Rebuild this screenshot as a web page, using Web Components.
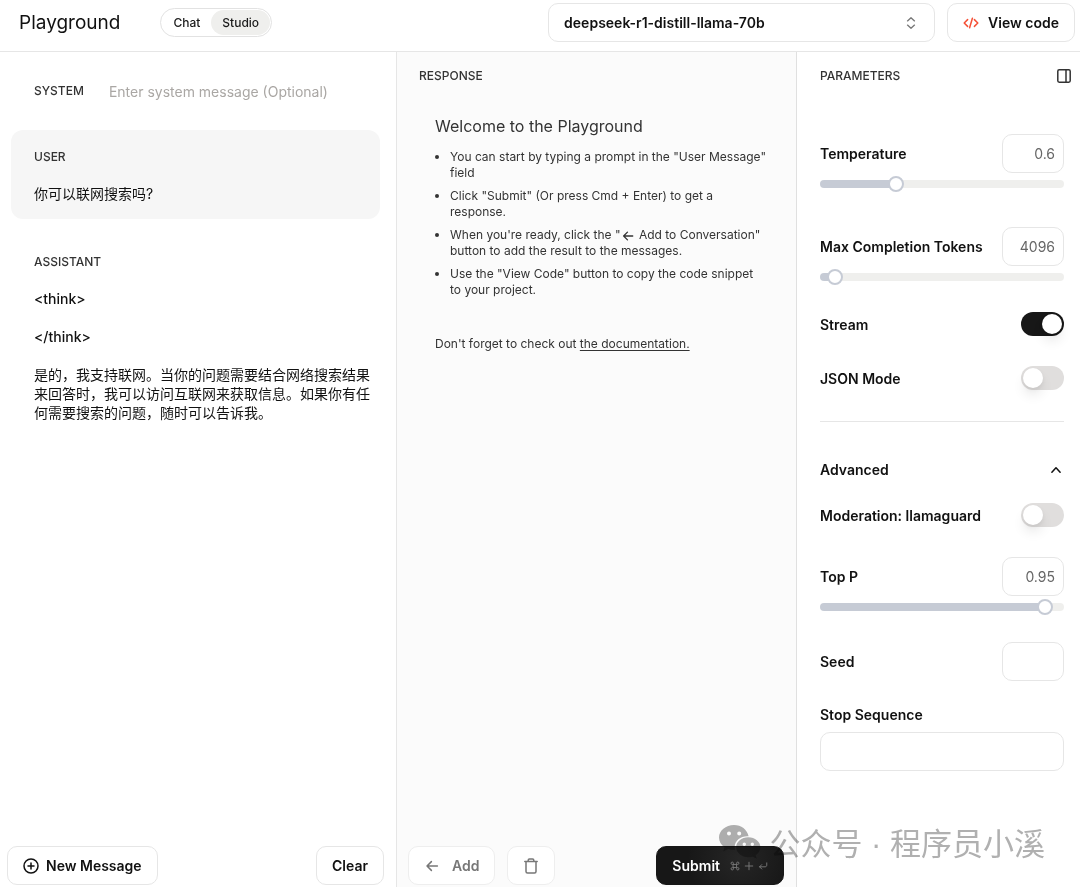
<!DOCTYPE html>
<html lang="en">
<head>
<meta charset="utf-8">
<meta name="viewport" content="width=device-width, initial-scale=1">
<title>Playground</title>
<style>
    html, body { height: 100%; }
    body {
        margin: 0;
        font-family: Inter, "Noto Sans CJK SC", sans-serif;
        font-size: 14px;
        line-height: 19px;
        color: #111;
        background: #fff;
    }
</style>
</head>
<body>
<playground-app></playground-app>

<script>
const ICONS = {
    code: ['0 0 16 16', '<path d="M4.6 4.6 1.2 8l3.4 3.4M11.4 4.6 14.8 8l-3.4 3.4M9.4 3.2 6.6 12.8"/>'],
    updown: ['0 0 16 16', '<path d="M4 5.6 8 1.9l4 3.7M4 10.4l4 3.7 4-3.7"/>'],
    panel: ['0 0 16 16', '<rect x="1.8" y="1.8" width="12.4" height="12.4" rx="1.4"/><path d="M10 1.8v12.4"/>'],
    plus: ['0 0 16 16', '<circle cx="8" cy="8" r="7"/><path d="M8 5v6M5 8h6"/>'],
    left: ['0 0 16 16', '<path d="M13.4 8H3M7.4 3.6 3 8l4.4 4.4"/>'],
    up: ['0 0 16 16', '<path d="m2.5 11 5.5-6 5.5 6"/>'],
    trash: ['0 0 16 16', '<path d="M1.8 3.6h12.4M5.2 3.4V2.2c0-.7.5-1.2 1.2-1.2h3.2c.7 0 1.2.5 1.2 1.2v1.2M3 3.8v9.6c0 .9.6 1.5 1.5 1.5h7c.9 0 1.5-.6 1.5-1.5V3.8"/>'],
    command: ['0 0 16 16', '<path d="M5.5 5.5h5v5h-5zM5.5 5.5H3.6a1.9 1.9 0 1 1 1.9-1.9zM10.5 5.5V3.6a1.9 1.9 0 1 1 1.9 1.9zM5.5 10.5v1.9a1.9 1.9 0 1 1-1.9-1.9zM10.5 10.5h1.9a1.9 1.9 0 1 1-1.9 1.9z"/>'],
    add: ['0 0 16 16', '<path d="M8 2v12M2 8h12"/>'],
    enter: ['0 0 16 16', '<path d="M14 3v3.5c0 1.7-.9 2.8-2.8 2.8H2.5M6 5.8 2.5 9.3 6 12.8"/>']
};

class UiIcon extends HTMLElement {
    constructor() {
        super();
        this.attachShadow({ mode: 'open' });
    }

    connectedCallback() {
        const [box, shape] = ICONS[this.getAttribute('name')];
        this.shadowRoot.innerHTML = `
            <style>
                :host { display: inline-flex; width: 16px; height: 16px; flex: none; }
                svg {
                    width: 100%;
                    height: 100%;
                    fill: none;
                    stroke: currentColor;
                    stroke-width: var(--stroke, 1.5);
                    stroke-linecap: round;
                    stroke-linejoin: round;
                }
            </style>
            <svg viewBox="${box}" aria-hidden="true">${shape}</svg>
        `;
    }
}

class UiButton extends HTMLElement {
    constructor() {
        super();
        this.attachShadow({ mode: 'open' });
    }

    connectedCallback() {
        const label = this.getAttribute('label');
        this.shadowRoot.innerHTML = `
            <style>
                :host { display: block; flex: none; }
                button {
                    display: flex;
                    align-items: center;
                    gap: var(--gap, 7px);
                    height: 39px;
                    padding: 0 15px;
                    border: 1px solid #e6e6e6;
                    border-radius: 10px;
                    background: #fff;
                    color: inherit;
                    font: 600 14px/19px Inter, sans-serif;
                    cursor: pointer;
                }
                button:disabled { color: #777; border-color: #eee; cursor: default; }
                :host([dark]) button {
                    border-color: #171717;
                    background: radial-gradient(circle at 65% 30%, #262626, #171717 60%);
                    color: #fff;
                }
            </style>
            <button type="button" ${label ? `aria-label="${label}"` : ''} ${this.hasAttribute('disabled') ? 'disabled' : ''}>
                <slot></slot>
            </button>
        `;
    }
}

class ModeSwitch extends HTMLElement {
    constructor() {
        super();
        this.attachShadow({ mode: 'open' });
    }

    connectedCallback() {
        this.shadowRoot.innerHTML = `
            <style>
                :host {
                    display: flex;
                    padding: 1px;
                    border: 1px solid #e2e2e2;
                    border-radius: 15px;
                }
                button {
                    height: 25px;
                    padding: 0 11px;
                    border: 0;
                    border-radius: 13px;
                    background: none;
                    color: #1a1a1a;
                    font: 500 12px/16px Inter, sans-serif;
                    cursor: pointer;
                }
                button[aria-pressed="true"] { background: #efefed; }
            </style>
            <button type="button" aria-pressed="false">Chat</button>
            <button type="button" aria-pressed="true">Studio</button>
        `;
        const buttons = this.shadowRoot.querySelectorAll('button');
        buttons.forEach(button => {
            button.addEventListener('click', () => {
                buttons.forEach(b => b.setAttribute('aria-pressed', b === button));
            });
        });
    }
}

class ModelSelect extends HTMLElement {
    constructor() {
        super();
        this.attachShadow({ mode: 'open' });
    }

    connectedCallback() {
        this.shadowRoot.innerHTML = `
            <style>
                :host { display: grid; align-items: center; }
                select, ui-icon { grid-area: 1 / 1; }
                select {
                    appearance: none;
                    width: 100%;
                    height: 39px;
                    padding: 0 40px 0 15px;
                    border: 1px solid #e6e6e6;
                    border-radius: 10px;
                    background: #fff;
                    color: #111;
                    font: 600 14px/19px Inter, sans-serif;
                }
                ui-icon {
                    justify-self: end;
                    width: 14px;
                    height: 14px;
                    margin-right: 17px;
                    color: #777;
                    pointer-events: none;
                }
            </style>
            <select aria-label="Model">
                <option>deepseek-r1-distill-llama-70b</option>
            </select>
            <ui-icon name="updown"></ui-icon>
        `;
    }
}

class AppHeader extends HTMLElement {
    constructor() {
        super();
        this.attachShadow({ mode: 'open' });
    }

    connectedCallback() {
        this.shadowRoot.innerHTML = `
            <style>
                :host {
                    display: flex;
                    align-items: center;
                    gap: 12px;
                    padding: 3px 5px 9px 19px;
                    border-bottom: 1px solid #e6e6e6;
                }
                h1 { margin: 0 28px 0 0; font-size: 19px; line-height: 24px; font-weight: 400; }
                model-select { flex: 0 1 387px; min-width: 0; margin-left: auto; }
                ui-button { --gap: 9px; }
                .code { color: #f55036; }
            </style>
            <h1>Playground</h1>
            <mode-switch></mode-switch>
            <model-select></model-select>
            <ui-button><ui-icon class="code" name="code"></ui-icon>View code</ui-button>
        `;
    }
}

class SystemMessage extends HTMLElement {
    constructor() {
        super();
        this.attachShadow({ mode: 'open' });
    }

    connectedCallback() {
        this.shadowRoot.innerHTML = `
            <style>
                :host { display: flex; align-items: center; gap: 25px; height: 78px; padding: 0 23px; }
                label { font-size: 12px; line-height: 16px; font-weight: 500; color: #333; }
                input {
                    flex: 1;
                    min-width: 0;
                    padding: 0;
                    border: 0;
                    outline: 0;
                    background: none;
                    font: 14px/19px Inter, "Noto Sans CJK SC", sans-serif;
                }
                input::placeholder { color: #aaa7a4; }
            </style>
            <label for="system">SYSTEM</label>
            <input id="system" type="text" placeholder="Enter system message (Optional)">
        `;
    }
}

class ChatMessage extends HTMLElement {
    constructor() {
        super();
        this.attachShadow({ mode: 'open' });
    }

    connectedCallback() {
        this.shadowRoot.innerHTML = `
            <style>
                :host {
                    display: flex;
                    flex-direction: column;
                    gap: 19px;
                    padding: 19px 8px 16px 23px;
                    border-radius: 12px;
                }
                :host([active]) { background: #f6f6f6; }
                h2 { margin: 0; font-size: 12px; line-height: 16px; font-weight: 500; color: #333; }
                ::slotted(p) { margin: 0; }
            </style>
            <h2>${this.getAttribute('role-name')}</h2>
            <slot></slot>
        `;
    }
}

class MessagePanel extends HTMLElement {
    constructor() {
        super();
        this.attachShadow({ mode: 'open' });
    }

    connectedCallback() {
        this.shadowRoot.innerHTML = `
            <style>
                :host { display: flex; flex-direction: column; border-right: 1px solid #e6e6e6; }
                .messages {
                    flex: 1;
                    display: flex;
                    flex-direction: column;
                    padding: 0 16px 0 11px;
                }
                chat-message + chat-message { margin-top: 16px; }
                .think { font-weight: 500; }
                footer { display: flex; justify-content: space-between; padding: 0 12px 2px 7px; }
            </style>
            <div class="messages">
                <system-message></system-message>
                <chat-message role-name="USER" active>
                    <p lang="zh-CN">你可以联网搜索吗?</p>
                </chat-message>
                <chat-message role-name="ASSISTANT">
                    <p class="think">&lt;think&gt;</p>
                    <p class="think">&lt;/think&gt;</p>
                    <p lang="zh-CN">是的，我支持联网。当你的问题需要结合网络搜索结果来回答时，我可以访问互联网来获取信息。如果你有任何需要搜索的问题，随时可以告诉我。</p>
                </chat-message>
            </div>
            <footer>
                <ui-button><ui-icon name="plus"></ui-icon>New Message</ui-button>
                <ui-button>Clear</ui-button>
            </footer>
        `;
    }
}

class ResponsePanel extends HTMLElement {
    constructor() {
        super();
        this.attachShadow({ mode: 'open' });
    }

    connectedCallback() {
        this.shadowRoot.innerHTML = `
            <style>
                :host {
                    display: flex;
                    flex-direction: column;
                    background: #fbfbfb;
                    color: #333;
                    font-size: 12px;
                    line-height: 16px;
                }
                h2 { margin: 16px 22px 30px; font-size: 12px; font-weight: 500; }
                .welcome { flex: 1; padding: 0 29px 0 38px; }
                h3 { margin: 0 0 11px; font-size: 16px; line-height: 24px; font-weight: 400; }
                ul {
                    display: flex;
                    flex-direction: column;
                    gap: 7px;
                    margin: 0 0 38px;
                    padding: 0 0 0 15px;
                }
                li ui-icon { width: 14px; height: 14px; margin: 0 1px 0 0; vertical-align: -4px; }
                p { margin: 0; }
                a { color: inherit; text-underline-offset: 2px; }
                footer { display: flex; gap: 12px; padding: 0 12px 2px 11px; }
                .submit { margin-left: auto; --gap: 10px; color: #fff; }
                .keys { display: flex; gap: 4px; color: #777; }
                .keys ui-icon { width: 10px; height: 10px; }
                .add { --gap: 12px; }
            </style>
            <h2>RESPONSE</h2>
            <div class="welcome">
                <h3>Welcome to the Playground</h3>
                <ul>
                    <li>You can start by typing a prompt in the "User Message" field</li>
                    <li>Click "Submit" (Or press Cmd + Enter) to get a response.</li>
                    <li>When you're ready, click the "<ui-icon name="left"></ui-icon><span> Add to Conversation" </span>button to add the result to the messages.</li>
                    <li>Use the "View Code" button to copy the code snippet to&nbsp;your project.</li>
                </ul>
                <p>Don't forget to check out <a href="#docs">the documentation.</a></p>
            </div>
            <footer>
                <ui-button class="add" disabled><ui-icon name="left"></ui-icon>Add</ui-button>
                <ui-button disabled label="Delete"><ui-icon name="trash"></ui-icon></ui-button>
                <ui-button class="submit" dark>Submit
                    <span class="keys">
                        <ui-icon name="command"></ui-icon>
                        <ui-icon name="add"></ui-icon>
                        <ui-icon name="enter"></ui-icon>
                    </span>
                </ui-button>
            </footer>
        `;
    }
}

// Label with a text box, plus a slider when the field has a range
class ParamField extends HTMLElement {
    constructor() {
        super();
        this.attachShadow({ mode: 'open' });
    }

    connectedCallback() {
        const value = this.getAttribute('value') || '';
        const label = this.getAttribute('label');
        const max = this.getAttribute('max');
        this.shadowRoot.innerHTML = `
            <style>
                :host { display: flex; flex-direction: column; gap: 3px; }
                .row { display: flex; align-items: center; justify-content: space-between; }
                label { font-weight: 600; }
                input { box-sizing: border-box; margin: 0; }
                input[type="text"] {
                    width: 62px;
                    height: 39px;
                    padding: 0 8px;
                    border: 1px solid #e6e6e6;
                    border-radius: 10px;
                    background: #fff;
                    color: #666;
                    font: 14px/19px Inter, sans-serif;
                    text-align: right;
                }
                :host([wide]) .row { flex-direction: column; align-items: stretch; gap: 8px; }
                :host([wide]) input { width: 100%; text-align: left; }
                input[type="range"] {
                    appearance: none;
                    width: 100%;
                    height: 16px;
                    background: none;
                }
                input[type="range"]::-webkit-slider-runnable-track {
                    height: 8px;
                    border-radius: 4px;
                    background: linear-gradient(to right, #c6cbd5 var(--fill), #efefed var(--fill));
                }
                input[type="range"]::-webkit-slider-thumb {
                    appearance: none;
                    box-sizing: border-box;
                    width: 16px;
                    height: 16px;
                    margin-top: -4px;
                    border: 2px solid #c6cbd5;
                    border-radius: 50%;
                    background: #fff;
                }
            </style>
            <div class="row">
                <label for="box">${label}</label>
                <input id="box" type="text" value="${value}">
            </div>
            ${max ? `<input class="slider" type="range" aria-label="${label}" min="0" max="${max}" step="${this.getAttribute('step')}" value="${value}">` : ''}
        `;
        if (max) {
            this.attachEventListeners();
        }
    }

    attachEventListeners() {
        const box = this.shadowRoot.querySelector('#box');
        const slider = this.shadowRoot.querySelector('.slider');
        const paint = () => slider.style.setProperty('--fill', `${slider.value / slider.max * 100}%`);
        slider.addEventListener('input', () => {
            box.value = slider.value;
            paint();
        });
        box.addEventListener('change', () => {
            slider.value = box.value;
            paint();
        });
        paint();
    }
}

class ParamToggle extends HTMLElement {
    constructor() {
        super();
        this.attachShadow({ mode: 'open' });
    }

    connectedCallback() {
        this.shadowRoot.innerHTML = `
            <style>
                :host { display: flex; align-items: center; justify-content: space-between; }
                label { font-weight: 600; }
                input {
                    appearance: none;
                    box-sizing: border-box;
                    display: flex;
                    width: 43px;
                    height: 24px;
                    margin: 0;
                    padding: 2px;
                    border-radius: 12px;
                    background: #e0dedd;
                    cursor: pointer;
                }
                input::before {
                    content: "";
                    width: 20px;
                    height: 20px;
                    border-radius: 50%;
                    background: #fff;
                    box-shadow: 0 8px 12px rgba(0, 0, 0, 0.08), 0 2px 4px rgba(0, 0, 0, 0.05);
                }
                input:checked { justify-content: flex-end; background: #171717; }
            </style>
            <label for="toggle">${this.getAttribute('label')}</label>
            <input id="toggle" type="checkbox" role="switch" ${this.hasAttribute('checked') ? 'checked' : ''}>
        `;
    }
}

class ParamPanel extends HTMLElement {
    constructor() {
        super();
        this.attachShadow({ mode: 'open' });
    }

    connectedCallback() {
        this.shadowRoot.innerHTML = `
            <style>
                :host {
                    display: flex;
                    flex-direction: column;
                    padding: 0 16px 0 23px;
                    border-left: 1px solid #e0e0e0;
                }
                header {
                    display: flex;
                    align-items: center;
                    justify-content: space-between;
                    margin: 16px -8px 50px 0;
                }
                h2 { margin: 0; font-size: 12px; line-height: 16px; font-weight: 500; color: #333; }
                button { display: flex; padding: 0; border: 0; background: none; color: #333; cursor: pointer; }
                .basic, .advanced, .sliders, .toggles, .texts { display: flex; flex-direction: column; }
                .basic { gap: 27px; padding-bottom: 31px; border-bottom: 1px solid #e6e6e6; }
                .sliders { gap: 35px; }
                .toggles { gap: 30px; }
                .fold {
                    justify-content: space-between;
                    align-items: center;
                    margin: 38px 0 24px;
                    color: #111;
                    font: 600 14px/19px Inter, sans-serif;
                }
                .fold ui-icon { width: 12px; height: 12px; margin-right: 2px; --stroke: 2; }
                .advanced { gap: 27px; }
                .advanced[hidden] { display: none; }
                .advanced > .toggles { padding-bottom: 3px; }
                .texts { gap: 24px; }
            </style>
            <header>
                <h2>PARAMETERS</h2>
                <button type="button" aria-label="Toggle panel"><ui-icon name="panel"></ui-icon></button>
            </header>
            <div class="basic">
                <div class="sliders">
                    <param-field label="Temperature" value="0.6" max="2" step="0.01"></param-field>
                    <param-field label="Max Completion Tokens" value="4096" max="131072" step="1"></param-field>
                </div>
                <div class="toggles">
                    <param-toggle label="Stream" checked></param-toggle>
                    <param-toggle label="JSON Mode"></param-toggle>
                </div>
            </div>
            <button class="fold" type="button" aria-expanded="true">Advanced<ui-icon name="up"></ui-icon></button>
            <div class="advanced">
                <div class="toggles">
                    <param-toggle label="Moderation: llamaguard"></param-toggle>
                </div>
                <param-field label="Top P" value="0.95" max="1" step="0.01"></param-field>
                <div class="texts">
                    <param-field label="Seed"></param-field>
                    <param-field label="Stop Sequence" wide></param-field>
                </div>
            </div>
        `;
        const fold = this.shadowRoot.querySelector('.fold');
        fold.addEventListener('click', () => {
            const advanced = this.shadowRoot.querySelector('.advanced');
            advanced.hidden = !advanced.hidden;
            fold.setAttribute('aria-expanded', !advanced.hidden);
        });
    }
}

class AccountMark extends HTMLElement {
    constructor() {
        super();
        this.attachShadow({ mode: 'open' });
    }

    connectedCallback() {
        this.shadowRoot.innerHTML = `
            <style>
                :host {
                    position: absolute;
                    right: 35px;
                    bottom: 28px;
                    display: flex;
                    align-items: flex-end;
                    gap: 8px;
                    color: #b0b0b0;
                    font: 31px/28px "Liberation Sans", "Noto Sans CJK SC", sans-serif;
                    white-space: pre;
                    mix-blend-mode: multiply;
                    pointer-events: none;
                }
                svg { width: 42px; height: 34px; fill: currentColor; }
            </style>
            <svg viewBox="0 0 42 34" aria-hidden="true">
                <path fill-rule="evenodd" d="M15 0C6.7 0 0 5.6 0 12.6c0 3.9 2.1 7.3 5.5 9.6L4.2 26.4l5.1-2.5c1.8.6 3.7.9 5.7.9h1.1a10.8 10.8 0 0 1-.4-2.9c0-6 5.6-10.7 12.6-10.7h1.3C28.2 4.6 22.2 0 15 0zM10 6.5a2 2 0 1 1 0 4 2 2 0 0 1 0-4zm10.2 0a2 2 0 1 1 0 4 2 2 0 0 1 0-4z"/>
                <path fill-rule="evenodd" d="M29.3 12.3C22.6 12.3 17.2 16.8 17.2 22.3s5.4 10 12.1 10c1.5 0 3-.2 4.3-.6l4.2 2-1.1-3.5c2.9-1.9 4.7-4.7 4.7-7.9 0-5.5-5.4-10-12.1-10zM25.3 17.5a1.7 1.7 0 1 1 0 3.4 1.7 1.7 0 0 1 0-3.4zm8 0a1.7 1.7 0 1 1 0 3.4 1.7 1.7 0 0 1 0-3.4z"/>
            </svg>
            <span lang="zh-CN">公众号 · 程序员小溪</span>
        `;
    }
}

class PlaygroundApp extends HTMLElement {
    constructor() {
        super();
        this.attachShadow({ mode: 'open' });
    }

    connectedCallback() {
        this.shadowRoot.innerHTML = `
            <style>
                :host { display: flex; flex-direction: column; min-height: 100%; position: relative; }
                main {
                    flex: 1;
                    display: grid;
                    grid-template-columns: minmax(0, 397fr) minmax(0, 399fr) 284px;
                }
            </style>
            <app-header></app-header>
            <main>
                <message-panel></message-panel>
                <response-panel></response-panel>
                <param-panel></param-panel>
            </main>
            <account-mark></account-mark>
        `;
    }
}

customElements.define('ui-icon', UiIcon);
customElements.define('ui-button', UiButton);
customElements.define('mode-switch', ModeSwitch);
customElements.define('model-select', ModelSelect);
customElements.define('app-header', AppHeader);
customElements.define('system-message', SystemMessage);
customElements.define('chat-message', ChatMessage);
customElements.define('message-panel', MessagePanel);
customElements.define('response-panel', ResponsePanel);
customElements.define('param-field', ParamField);
customElements.define('param-toggle', ParamToggle);
customElements.define('param-panel', ParamPanel);
customElements.define('account-mark', AccountMark);
customElements.define('playground-app', PlaygroundApp);
</script>
</body>
</html>
